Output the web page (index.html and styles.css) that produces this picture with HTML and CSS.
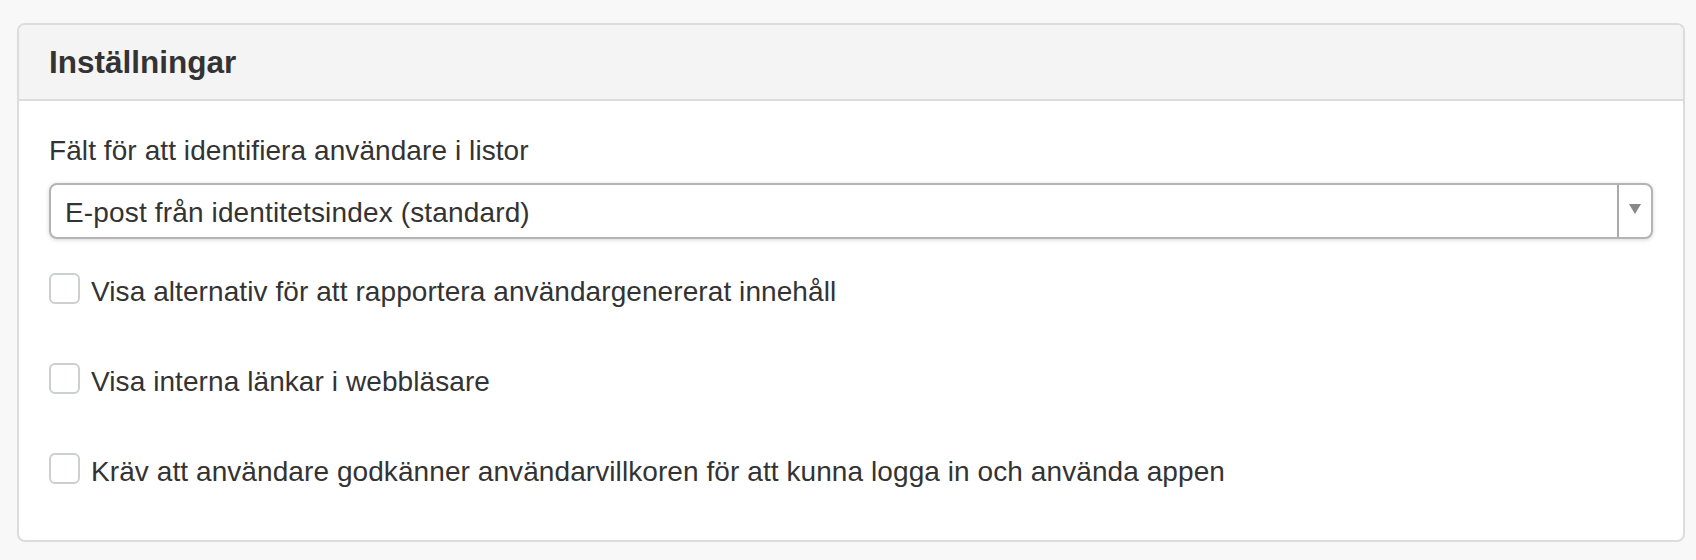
FILE: index.html
```html
<!DOCTYPE html>
<html lang="sv">
<head>
<meta charset="utf-8">
<title>Inställningar</title>
<link rel="stylesheet" href="styles.css">
</head>
<body>
<div class="panel">
  <div class="panel-heading">
    <h3 class="panel-title">Inställningar</h3>
  </div>
  <div class="panel-body">
    <label class="field-label">Fält för att identifiera användare i listor</label>
    <div class="select">
      <span class="select-value">E-post från identitetsindex (standard)</span>
      <span class="select-arrow">
        <svg width="12" height="10" viewBox="0 0 12 10"><polygon points="0,0 12,0 6,10" fill="#888"/></svg>
      </span>
    </div>
    <div class="checks">
      <label class="check-row"><span class="box"></span><span>Visa alternativ för att rapportera användargenererat innehåll</span></label>
      <label class="check-row"><span class="box"></span><span>Visa interna länkar i webbläsare</span></label>
      <label class="check-row"><span class="box"></span><span>Kräv att användare godkänner användarvillkoren för att kunna logga in och använda appen</span></label>
    </div>
  </div>
</div>
</body>
</html>
```
FILE: styles.css
```css
html, body {
  margin: 0;
  padding: 0;
  background: #f8f8f8;
}
body {
  font-family: "Liberation Sans", Arial, Helvetica, sans-serif;
  color: #333;
  font-size: 28px;
  line-height: 40px;
  letter-spacing: 0.08px;
  padding: 23px 11px 0 17px;
}
.panel {
  width: 1668px;
  box-sizing: border-box;
  background: #fff;
  border: 2px solid #dcdcdc;
  border-radius: 8px;
  overflow: hidden;
}
.panel-heading {
  background: #f4f4f4;
  border-bottom: 2px solid #dcdcdc;
  padding: 20px 30px;
}
.panel-title {
  margin: 0;
  font-size: 31.5px;
  line-height: 34px;
  font-weight: bold;
  letter-spacing: 0;
  color: #333;
}
.panel-body {
  padding: 30px 30px 48px;
}
.field-label {
  display: block;
  margin-bottom: 12px;
}
.select {
  display: flex;
  align-items: stretch;
  height: 56px;
  box-sizing: border-box;
  border: 2px solid #b4b4b4;
  border-radius: 8px;
  background: #fff;
  box-shadow: 0 1px 4px rgba(0, 0, 0, 0.16);
}
.select-value {
  flex: 1;
  display: flex;
  align-items: center;
  padding-left: 14px;
  padding-top: 4px;
  letter-spacing: 0.15px;
}
.select-arrow {
  width: 34px;
  border-left: 2px solid #aaa;
  display: flex;
  align-items: center;
  justify-content: center;
  padding-bottom: 4px;
  box-sizing: border-box;
}
.select-arrow svg {
  display: block;
}
.checks {
  margin-top: 33px;
  display: flex;
  flex-direction: column;
  gap: 50px;
}
.check-row {
  display: flex;
  align-items: flex-start;
  gap: 11px;
}
.box {
  width: 31px;
  height: 31px;
  box-sizing: border-box;
  margin-top: 1px;
  border: 2px solid #cbcfcf;
  border-radius: 6px;
  background: #fff;
  flex: none;
}
```
